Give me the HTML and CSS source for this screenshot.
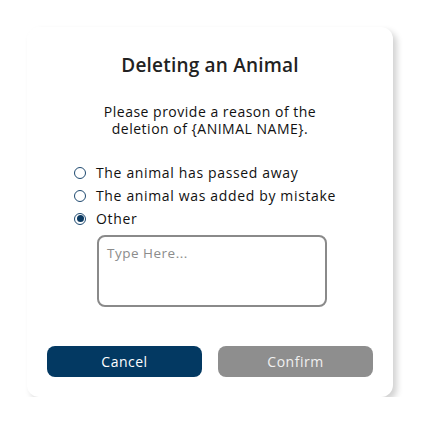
FILE: index.html
```html
<!DOCTYPE html>
<html>
<head>
<meta charset="utf-8">
<link rel="stylesheet" href="styles.css">
</head>
<body>
<div class="page">
  <div class="card">
    <h1 class="title">Deleting an Animal</h1>
    <p class="prompt">Please provide a reason of the<br>deletion of {ANIMAL NAME}.</p>
    <div class="options">
      <label class="option"><span class="radio"></span><span>The animal has passed away</span></label>
      <label class="option"><span class="radio"></span><span>The animal was added by mistake</span></label>
      <label class="option"><span class="radio checked"></span><span>Other</span></label>
      <div class="textarea">Type Here...</div>
    </div>
    <div class="actions">
      <button class="btn cancel">Cancel</button>
      <button class="btn confirm">Confirm</button>
    </div>
  </div>
</div>
</body>
</html>
```
FILE: styles.css
```css
html, body {
  margin: 0;
  padding: 0;
  background: #ffffff;
}
body {
  font-family: "Open Sans", "DejaVu Sans", sans-serif;
  color: #111;
}
.page {
  padding: 27px 0 0 27px;
}
.card {
  width: 366px;
  height: 370px;
  box-sizing: border-box;
  background: #fff;
  border-radius: 12px;
  box-shadow: 4px 4px 6px rgba(0, 0, 0, 0.18);
  padding: 26px 20px 0 20px;
  display: flex;
  flex-direction: column;
  align-items: center;
}
.title {
  margin: 0;
  font-size: 19px;
  font-weight: 600;
  line-height: 24px;
  letter-spacing: 0.2px;
  color: #222;
}
.prompt {
  margin: 26px 0 0 0;
  font-size: 14px;
  line-height: 17px;
  letter-spacing: 0.5px;
  text-align: center;
}
.options {
  align-self: stretch;
  margin: 24px 0 0 27px;
  display: flex;
  flex-direction: column;
}
.option {
  display: flex;
  align-items: center;
  gap: 10px;
  height: 23px;
  font-size: 14px;
  letter-spacing: 0.65px;
}
.radio {
  width: 10px;
  height: 10px;
  border: 1.5px solid #1f4a70;
  border-radius: 50%;
  box-sizing: content-box;
  position: relative;
}
.radio.checked::after {
  content: "";
  position: absolute;
  left: 1.5px;
  top: 1.5px;
  width: 7px;
  height: 7px;
  border-radius: 50%;
  background: #0b3a62;
}
.textarea {
  margin: 5px 0 0 23px;
  width: 230px;
  height: 72px;
  box-sizing: border-box;
  border: 2px solid #8a8a8a;
  border-radius: 8px;
  padding: 7px 8px;
  font-size: 13.5px;
  letter-spacing: 0.5px;
  color: #8c8c8c;
}
.actions {
  align-self: stretch;
  margin-top: 39px;
  display: flex;
  gap: 16px;
}
.btn {
  flex: 1;
  height: 31px;
  border: none;
  border-radius: 8px;
  font-family: inherit;
  font-size: 14px;
  letter-spacing: 0.5px;
  color: #fff;
}
.cancel {
  background: #033962;
}
.confirm {
  background: #8e8e8e;
  color: #f0f0f0;
}
```
